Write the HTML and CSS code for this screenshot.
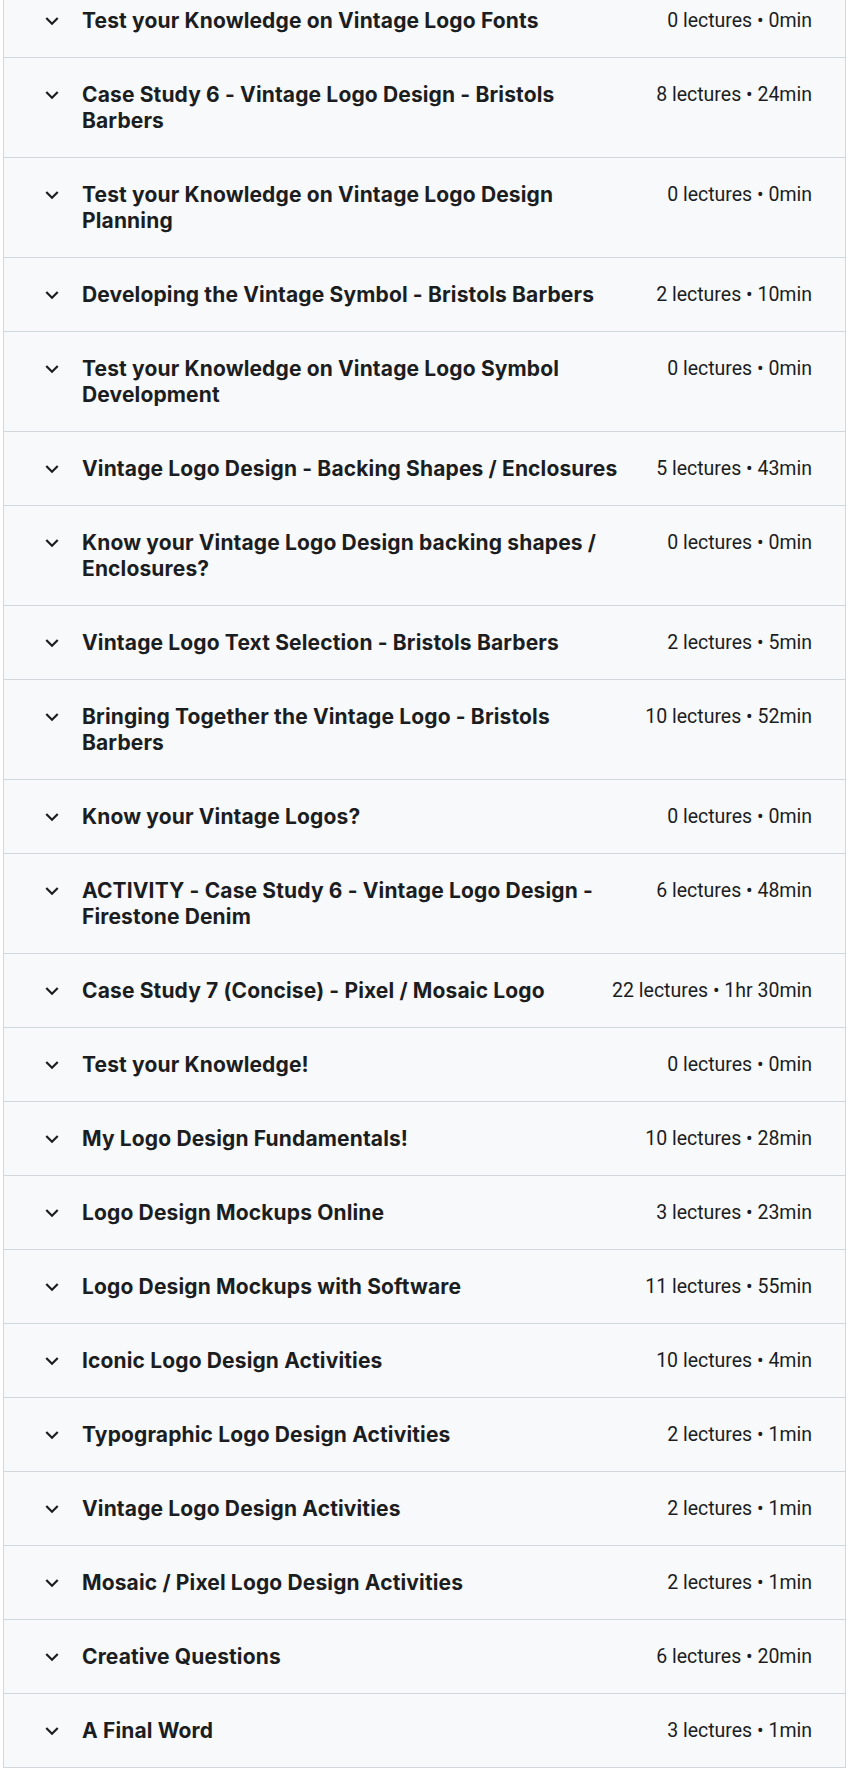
FILE: index.html
```html
<!DOCTYPE html>
<html lang="en">
<head>
<meta charset="utf-8">
<title>Course content</title>
<link rel="stylesheet" href="styles.css">
</head>
<body>
<div class="curriculum">
  <div class="section"><span class="chev"><svg viewBox="0 0 24 24"><path d="M16.59 8.59L12 13.17 7.41 8.59 6 10l6 6 6-6z"/></svg></span><span class="title">Test your Knowledge on Vintage Logo Fonts</span><span class="meta">0 lectures • 0min</span></div>
  <div class="section"><span class="chev"><svg viewBox="0 0 24 24"><path d="M16.59 8.59L12 13.17 7.41 8.59 6 10l6 6 6-6z"/></svg></span><span class="title">Case Study 6 - Vintage Logo Design - Bristols Barbers</span><span class="meta">8 lectures • 24min</span></div>
  <div class="section"><span class="chev"><svg viewBox="0 0 24 24"><path d="M16.59 8.59L12 13.17 7.41 8.59 6 10l6 6 6-6z"/></svg></span><span class="title">Test your Knowledge on Vintage Logo Design Planning</span><span class="meta">0 lectures • 0min</span></div>
  <div class="section"><span class="chev"><svg viewBox="0 0 24 24"><path d="M16.59 8.59L12 13.17 7.41 8.59 6 10l6 6 6-6z"/></svg></span><span class="title">Developing the Vintage Symbol - Bristols Barbers</span><span class="meta">2 lectures • 10min</span></div>
  <div class="section"><span class="chev"><svg viewBox="0 0 24 24"><path d="M16.59 8.59L12 13.17 7.41 8.59 6 10l6 6 6-6z"/></svg></span><span class="title">Test your Knowledge on Vintage Logo Symbol Development</span><span class="meta">0 lectures • 0min</span></div>
  <div class="section"><span class="chev"><svg viewBox="0 0 24 24"><path d="M16.59 8.59L12 13.17 7.41 8.59 6 10l6 6 6-6z"/></svg></span><span class="title">Vintage Logo Design - Backing Shapes / Enclosures</span><span class="meta">5 lectures • 43min</span></div>
  <div class="section"><span class="chev"><svg viewBox="0 0 24 24"><path d="M16.59 8.59L12 13.17 7.41 8.59 6 10l6 6 6-6z"/></svg></span><span class="title">Know your Vintage Logo Design backing shapes / Enclosures?</span><span class="meta">0 lectures • 0min</span></div>
  <div class="section"><span class="chev"><svg viewBox="0 0 24 24"><path d="M16.59 8.59L12 13.17 7.41 8.59 6 10l6 6 6-6z"/></svg></span><span class="title">Vintage Logo Text Selection - Bristols Barbers</span><span class="meta">2 lectures • 5min</span></div>
  <div class="section"><span class="chev"><svg viewBox="0 0 24 24"><path d="M16.59 8.59L12 13.17 7.41 8.59 6 10l6 6 6-6z"/></svg></span><span class="title">Bringing Together the Vintage Logo - Bristols Barbers</span><span class="meta">10 lectures • 52min</span></div>
  <div class="section"><span class="chev"><svg viewBox="0 0 24 24"><path d="M16.59 8.59L12 13.17 7.41 8.59 6 10l6 6 6-6z"/></svg></span><span class="title">Know your Vintage Logos?</span><span class="meta">0 lectures • 0min</span></div>
  <div class="section"><span class="chev"><svg viewBox="0 0 24 24"><path d="M16.59 8.59L12 13.17 7.41 8.59 6 10l6 6 6-6z"/></svg></span><span class="title">ACTIVITY - Case Study 6 - Vintage Logo Design - Firestone Denim</span><span class="meta">6 lectures • 48min</span></div>
  <div class="section"><span class="chev"><svg viewBox="0 0 24 24"><path d="M16.59 8.59L12 13.17 7.41 8.59 6 10l6 6 6-6z"/></svg></span><span class="title">Case Study 7 (Concise) - Pixel / Mosaic Logo</span><span class="meta">22 lectures • 1hr 30min</span></div>
  <div class="section"><span class="chev"><svg viewBox="0 0 24 24"><path d="M16.59 8.59L12 13.17 7.41 8.59 6 10l6 6 6-6z"/></svg></span><span class="title">Test your Knowledge!</span><span class="meta">0 lectures • 0min</span></div>
  <div class="section"><span class="chev"><svg viewBox="0 0 24 24"><path d="M16.59 8.59L12 13.17 7.41 8.59 6 10l6 6 6-6z"/></svg></span><span class="title">My Logo Design Fundamentals!</span><span class="meta">10 lectures • 28min</span></div>
  <div class="section"><span class="chev"><svg viewBox="0 0 24 24"><path d="M16.59 8.59L12 13.17 7.41 8.59 6 10l6 6 6-6z"/></svg></span><span class="title">Logo Design Mockups Online</span><span class="meta">3 lectures • 23min</span></div>
  <div class="section"><span class="chev"><svg viewBox="0 0 24 24"><path d="M16.59 8.59L12 13.17 7.41 8.59 6 10l6 6 6-6z"/></svg></span><span class="title">Logo Design Mockups with Software</span><span class="meta">11 lectures • 55min</span></div>
  <div class="section"><span class="chev"><svg viewBox="0 0 24 24"><path d="M16.59 8.59L12 13.17 7.41 8.59 6 10l6 6 6-6z"/></svg></span><span class="title">Iconic Logo Design Activities</span><span class="meta">10 lectures • 4min</span></div>
  <div class="section"><span class="chev"><svg viewBox="0 0 24 24"><path d="M16.59 8.59L12 13.17 7.41 8.59 6 10l6 6 6-6z"/></svg></span><span class="title">Typographic Logo Design Activities</span><span class="meta">2 lectures • 1min</span></div>
  <div class="section"><span class="chev"><svg viewBox="0 0 24 24"><path d="M16.59 8.59L12 13.17 7.41 8.59 6 10l6 6 6-6z"/></svg></span><span class="title">Vintage Logo Design Activities</span><span class="meta">2 lectures • 1min</span></div>
  <div class="section"><span class="chev"><svg viewBox="0 0 24 24"><path d="M16.59 8.59L12 13.17 7.41 8.59 6 10l6 6 6-6z"/></svg></span><span class="title">Mosaic / Pixel Logo Design Activities</span><span class="meta">2 lectures • 1min</span></div>
  <div class="section"><span class="chev"><svg viewBox="0 0 24 24"><path d="M16.59 8.59L12 13.17 7.41 8.59 6 10l6 6 6-6z"/></svg></span><span class="title">Creative Questions</span><span class="meta">6 lectures • 20min</span></div>
  <div class="section"><span class="chev"><svg viewBox="0 0 24 24"><path d="M16.59 8.59L12 13.17 7.41 8.59 6 10l6 6 6-6z"/></svg></span><span class="title">A Final Word</span><span class="meta">3 lectures • 1min</span></div>
</div>
</body>
</html>
```

FILE: styles.css
```css
html, body {
  margin: 0;
  padding: 0;
  background: #ffffff;
}

body {
  font-family: Inter, "Noto Sans", sans-serif;
  color: #1c1d1f;
  overflow: hidden;
}

.curriculum {
  margin: -16px 0 0 3px;
  width: 843px;
  box-sizing: border-box;
  border-left: 1px solid #d1d7dc;
  border-right: 1px solid #d1d7dc;
  background: #f7f9fa;
}

.section {
  display: flex;
  align-items: flex-start;
  padding: 24px 33px 23px 35px;
  border-bottom: 1px solid #d1d7dc;
  line-height: 26px;
}

.chev {
  flex: 0 0 auto;
  display: flex;
  align-items: center;
  height: 26px;
  margin-right: 17px;
}

.chev svg {
  width: 26px;
  height: 26px;
  fill: #1c1d1f;
}

.title {
  flex: 1 1 auto;
  font-family: Inter, "Noto Sans", sans-serif;
  font-size: 21px;
  font-weight: 700;
  letter-spacing: 0.14px;
}

.meta {
  flex: 0 0 auto;
  margin-left: 28px;
  font-family: Roboto, "Noto Sans", sans-serif;
  font-size: 19.5px;
  font-weight: 400;
}
```
